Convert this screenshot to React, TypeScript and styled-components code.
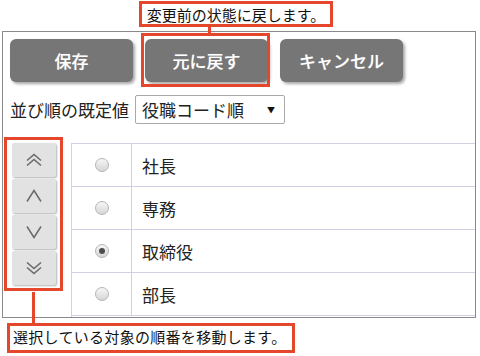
import React from "react";
import styled, { createGlobalStyle } from "styled-components";

const Global = createGlobalStyle`
  html, body { margin: 0; padding: 0; background: #fff; }
  body { font-family: "Noto Sans CJK JP", "Noto Sans", sans-serif; color: #222; }
`;

const RED = "#e5472d";

const Page = styled.div`
  position: relative;
  width: 480px;
  height: 356px;
  overflow: hidden;
`;

const Callout = styled.div<{
  $left: number;
  $width: number;
  $top: number;
  $height: number;
  $center?: boolean;
  $spacing?: number;
}>`
  box-sizing: border-box;
  margin-left: ${(p) => p.$left}px;
  margin-top: ${(p) => p.$top}px;
  width: ${(p) => p.$width}px;
  height: ${(p) => p.$height}px;
  border: 3px solid ${RED};
  background: #fff;
  font-size: 15px;
  line-height: 22px;
  letter-spacing: ${(p) => p.$spacing ?? 0}px;
  padding: 0 3px;
  text-align: ${(p) => (p.$center ? "center" : "left")};
  white-space: nowrap;
  color: #111;
`;

const Connector = styled.div<{ $left: number; $top: number; $height: number }>`
  position: absolute;
  left: ${(p) => p.$left}px;
  top: ${(p) => p.$top}px;
  width: 3px;
  height: ${(p) => p.$height}px;
  background: ${RED};
`;

const Panel = styled.div`
  box-sizing: border-box;
  margin-left: 2px;
  margin-top: 4px;
  width: 474px;
  height: 287px;
  border: 1px solid #8a8a8a;
  padding: 7px 0 0 7px;
  display: flex;
  flex-direction: column;
`;

const Toolbar = styled.div`
  display: flex;
  gap: 12px;
`;

const BtnWrap = styled.div`
  position: relative;
`;

const Highlight = styled.div<{ $l: number; $t: number; $r: number; $b: number }>`
  position: absolute;
  left: ${(p) => -p.$l}px;
  top: ${(p) => -p.$t}px;
  right: ${(p) => -p.$r}px;
  bottom: ${(p) => -p.$b}px;
  border: 3px solid ${RED};
  pointer-events: none;
`;

const ActionButton = styled.button`
  width: 123px;
  height: 43px;
  border: none;
  border-radius: 6px;
  background: #767676;
  color: #fff;
  font-family: inherit;
  font-size: 17px;
  font-weight: 500;
  box-shadow: 2px 2px 3px rgba(0, 0, 0, 0.35);
  text-shadow: 0 0 1px rgba(255, 255, 255, 0.4);
  padding: 0;
`;

const SortRow = styled.div`
  display: flex;
  align-items: center;
  gap: 6px;
  margin-top: 13px;
  height: 29px;
`;

const Label = styled.span`
  font-size: 17px;
  line-height: 29px;
  color: #222;
`;

const Select = styled.div`
  box-sizing: border-box;
  width: 150px;
  height: 29px;
  border: 1px solid #a9a9a9;
  border-radius: 2px;
  display: flex;
  align-items: center;
  justify-content: space-between;
  padding: 0 9px 0 6px;
  font-size: 17px;
  color: #222;
`;

const Caret = styled.span`
  font-size: 8px;
  color: #111;
`;

const Body = styled.div`
  display: flex;
  margin-top: 19px;
  margin-left: 2px;
  flex: 1;
`;

const MoverStack = styled.div`
  position: relative;
  display: flex;
  flex-direction: column;
  gap: 2px;
  width: 44px;
  align-self: flex-start;
`;

const MoveButton = styled.button`
  width: 44px;
  height: 34px;
  border: none;
  border-radius: 2px;
  background: #e2e2e2;
  box-shadow: 1px 1px 2px rgba(0, 0, 0, 0.3);
  display: flex;
  align-items: center;
  justify-content: center;
  padding: 0;
`;

const Table = styled.div`
  margin-left: 15px;
  flex: 1;
  border-left: 1px solid #d3d0e3;
  border-top: 1px solid #d3d0e3;
  display: flex;
  flex-direction: column;
`;

const Row = styled.div`
  display: grid;
  grid-template-columns: 60px 1fr;
  height: 43px;
  box-sizing: border-box;
  border-bottom: 1px solid #d3d0e3;
`;

const RadioCell = styled.div`
  display: flex;
  align-items: center;
  justify-content: center;
  border-right: 1px solid #d3d0e3;
`;

const Radio = styled.span<{ $checked?: boolean }>`
  box-sizing: border-box;
  width: 14px;
  height: 14px;
  border-radius: 50%;
  border: 1px solid #b5b5b5;
  background: linear-gradient(#f6f6f6, #d6d6d6);
  display: flex;
  align-items: center;
  justify-content: center;
  &::after {
    content: "";
    display: ${(p) => (p.$checked ? "block" : "none")};
    width: 6px;
    height: 6px;
    border-radius: 50%;
    background: #4d4d4d;
  }
`;

const NameCell = styled.div`
  display: flex;
  align-items: center;
  padding-left: 10px;
  font-size: 17px;
  color: #222;
`;

const SingleChevron = ({ dir }: { dir: "up" | "down" }) => (
  <svg width="18" height="14" viewBox="0 0 18 14" fill="none">
    <path
      d={dir === "up" ? "M2 12.5 L9 1.5 L16 12.5" : "M2 1.5 L9 12.5 L16 1.5"}
      stroke="#6a6a6a"
      strokeWidth="1.5"
    />
  </svg>
);

const DoubleChevron = ({ dir }: { dir: "up" | "down" }) => {
  const d = dir === "up" ? "M2 7 L9 1 L16 7" : "M2 1 L9 7 L16 1";
  return (
    <svg width="18" height="14" viewBox="0 0 18 14" fill="none">
      <path d={d} stroke="#6a6a6a" strokeWidth="1.6" transform="translate(0,0.5)" />
      <path d={d} stroke="#6a6a6a" strokeWidth="1.6" transform="translate(0,5.5)" />
    </svg>
  );
};

const rows = [
  { name: "社長", checked: false },
  { name: "専務", checked: false },
  { name: "取締役", checked: true },
  { name: "部長", checked: false },
];

export default function App() {
  return (
    <Page>
      <Global />
      <Callout $left={139} $width={194} $top={1} $height={26} $center>
        変更前の状態に戻します。
      </Callout>
      <Connector $left={208} $top={27} $height={7} />
      <Panel>
        <Toolbar>
          <BtnWrap>
            <ActionButton>保存</ActionButton>
          </BtnWrap>
          <BtnWrap>
            <ActionButton>元に戻す</ActionButton>
            <Highlight $l={4} $t={6} $r={2} $b={5} />
          </BtnWrap>
          <BtnWrap>
            <ActionButton>キャンセル</ActionButton>
          </BtnWrap>
        </Toolbar>
        <SortRow>
          <Label>並び順の既定値</Label>
          <Select>
            <span>役職コード順</span>
            <Caret>▼</Caret>
          </Select>
        </SortRow>
        <Body>
          <MoverStack>
            <MoveButton><DoubleChevron dir="up" /></MoveButton>
            <MoveButton><SingleChevron dir="up" /></MoveButton>
            <MoveButton><SingleChevron dir="down" /></MoveButton>
            <MoveButton><DoubleChevron dir="down" /></MoveButton>
            <Highlight $l={8} $t={6} $r={7} $b={6} />
          </MoverStack>
          <Table>
            {rows.map((r) => (
              <Row key={r.name}>
                <RadioCell>
                  <Radio $checked={r.checked} />
                </RadioCell>
                <NameCell>{r.name}</NameCell>
              </Row>
            ))}
          </Table>
        </Body>
      </Panel>
      <Connector $left={32} $top={292} $height={32} />
      <Callout $left={7} $width={288} $top={5} $height={30} $spacing={0.3}>
        選択している対象の順番を移動します。
      </Callout>
    </Page>
  );
}
